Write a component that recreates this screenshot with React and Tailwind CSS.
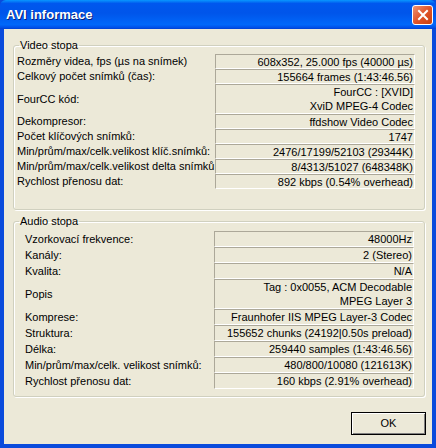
const video = [
  { label: "Rozměry videa, fps (µs na snímek)", value: ["608x352, 25.000 fps (40000 µs)"] },
  { label: "Celkový počet snímků (čas):", value: ["155664 frames (1:43:46.56)"] },
  { label: "FourCC kód:", value: ["FourCC : [XVID]", "XviD MPEG-4 Codec"], tall: true },
  { label: "Dekompresor:", value: ["ffdshow Video Codec"] },
  { label: "Počet klíčových snímků:", value: ["1747"] },
  { label: "Min/prům/max/celk.velikost klíč.snímků:", value: ["2476/17199/52103 (29344K)"] },
  { label: "Min/prům/max/celk.velikost delta snímků", value: ["8/4313/51027 (648348K)"] },
  { label: "Rychlost přenosu dat:", value: ["892 kbps (0.54% overhead)"] },
];

const audio = [
  { label: "Vzorkovací frekvence:", value: ["48000Hz"] },
  { label: "Kanály:", value: ["2 (Stereo)"] },
  { label: "Kvalita:", value: ["N/A"] },
  { label: "Popis", value: ["Tag : 0x0055, ACM Decodable", "MPEG Layer 3"], tall: true },
  { label: "Komprese:", value: ["Fraunhofer IIS MPEG Layer-3 Codec"] },
  { label: "Struktura:", value: ["155652 chunks (24192|0.50s preload)"] },
  { label: "Délka:", value: ["259440 samples (1:43:46.56)"] },
  { label: "Min/prům/max/celk. velikost snímků:", value: ["480/800/10080 (121613K)"] },
  { label: "Rychlost přenosu dat:", value: ["160 kbps (2.91% overhead)"] },
];

function ValueBox({ lines }) {
  return (
    <div className="flex h-full w-[200px] flex-col items-end justify-center border border-[#aca899] border-b-white border-r-white pr-[1px]">
      {lines.map((line) => (
        <span key={line} className="whitespace-nowrap leading-[14px]">
          {line}
        </span>
      ))}
    </div>
  );
}

function GroupBox({ title, children, className }) {
  return (
    <fieldset
      className={`rounded-[3px] border border-[#d0d0bf] shadow-[inset_1px_1px_0_#fff,1px_1px_0_#fff] ${className}`}
    >
      <legend className="ml-[5px] px-[1px] leading-[13px]">{title}</legend>
      {children}
    </fieldset>
  );
}

function CloseButton() {
  return (
    <div className="flex h-[20px] w-[21px] items-center justify-center rounded-[3px] border border-white bg-[linear-gradient(135deg,#ee9474,#e0542a_50%,#c8400f)]">
      <svg width="12" height="12" viewBox="0 0 12 12">
        <path d="M2 2 L10 10 M10 2 L2 10" stroke="#fff" strokeWidth="2" strokeLinecap="square" />
      </svg>
    </div>
  );
}

export default function App() {
  return (
    <div className="flex h-[448px] w-[436px] flex-col bg-[#0a4bdc] font-['Liberation_Sans',Arial,sans-serif] text-[11px] text-black">
      {/* title bar */}
      <div className="flex h-[29px] shrink-0 items-center justify-between rounded-t-[6px] bg-[linear-gradient(#0997ff,#0058ee_12%,#0055ea_45%,#0068fa_85%,#0050e8_95%,#0040d0)] pl-[6px] pr-[3px]">
        <span className="text-[13px] font-bold text-white [text-shadow:1px_1px_0_#0a1f7a]">AVI informace</span>
        <CloseButton />
      </div>

      {/* body */}
      <div className="mx-[4px] mb-[4px] flex flex-1 flex-col bg-[#ece9d8] pt-[10px]">
        <GroupBox title="Video stopa" className="ml-[9px] mr-[7px] pb-[20px]">
          <div className="mt-[2px] flex flex-col">
            {video.map((row) => (
              <div key={row.label} className={`flex items-center ${row.tall ? "h-[30px]" : "h-[15px]"}`}>
                <span className="whitespace-nowrap pl-[3px] leading-[13px]">{row.label}</span>
                <div className="ml-auto mr-[9px] h-full">
                  <ValueBox lines={row.value} />
                </div>
              </div>
            ))}
          </div>
        </GroupBox>

        <GroupBox title="Audio stopa" className="ml-[9px] mr-[7px] mt-[5px] pb-[7px]">
          <div className="mt-[3px] flex flex-col">
            {audio.map((row) => (
              <div key={row.label} className={`flex items-center ${row.tall ? "h-[30px]" : "h-[16px]"}`}>
                <span className="whitespace-nowrap pl-[11px] leading-[13px]">{row.label}</span>
                <div className="ml-auto mr-[10px] h-full">
                  <ValueBox lines={row.value} />
                </div>
              </div>
            ))}
          </div>
        </GroupBox>

        <div className="mt-[15px] flex justify-end pr-[6px]">
          <button className="h-[23px] w-[75px] border border-black bg-[#ece9d8] shadow-[inset_1px_1px_0_#fff,inset_-1px_-1px_0_#808080]">
            OK
          </button>
        </div>
      </div>
    </div>
  );
}
